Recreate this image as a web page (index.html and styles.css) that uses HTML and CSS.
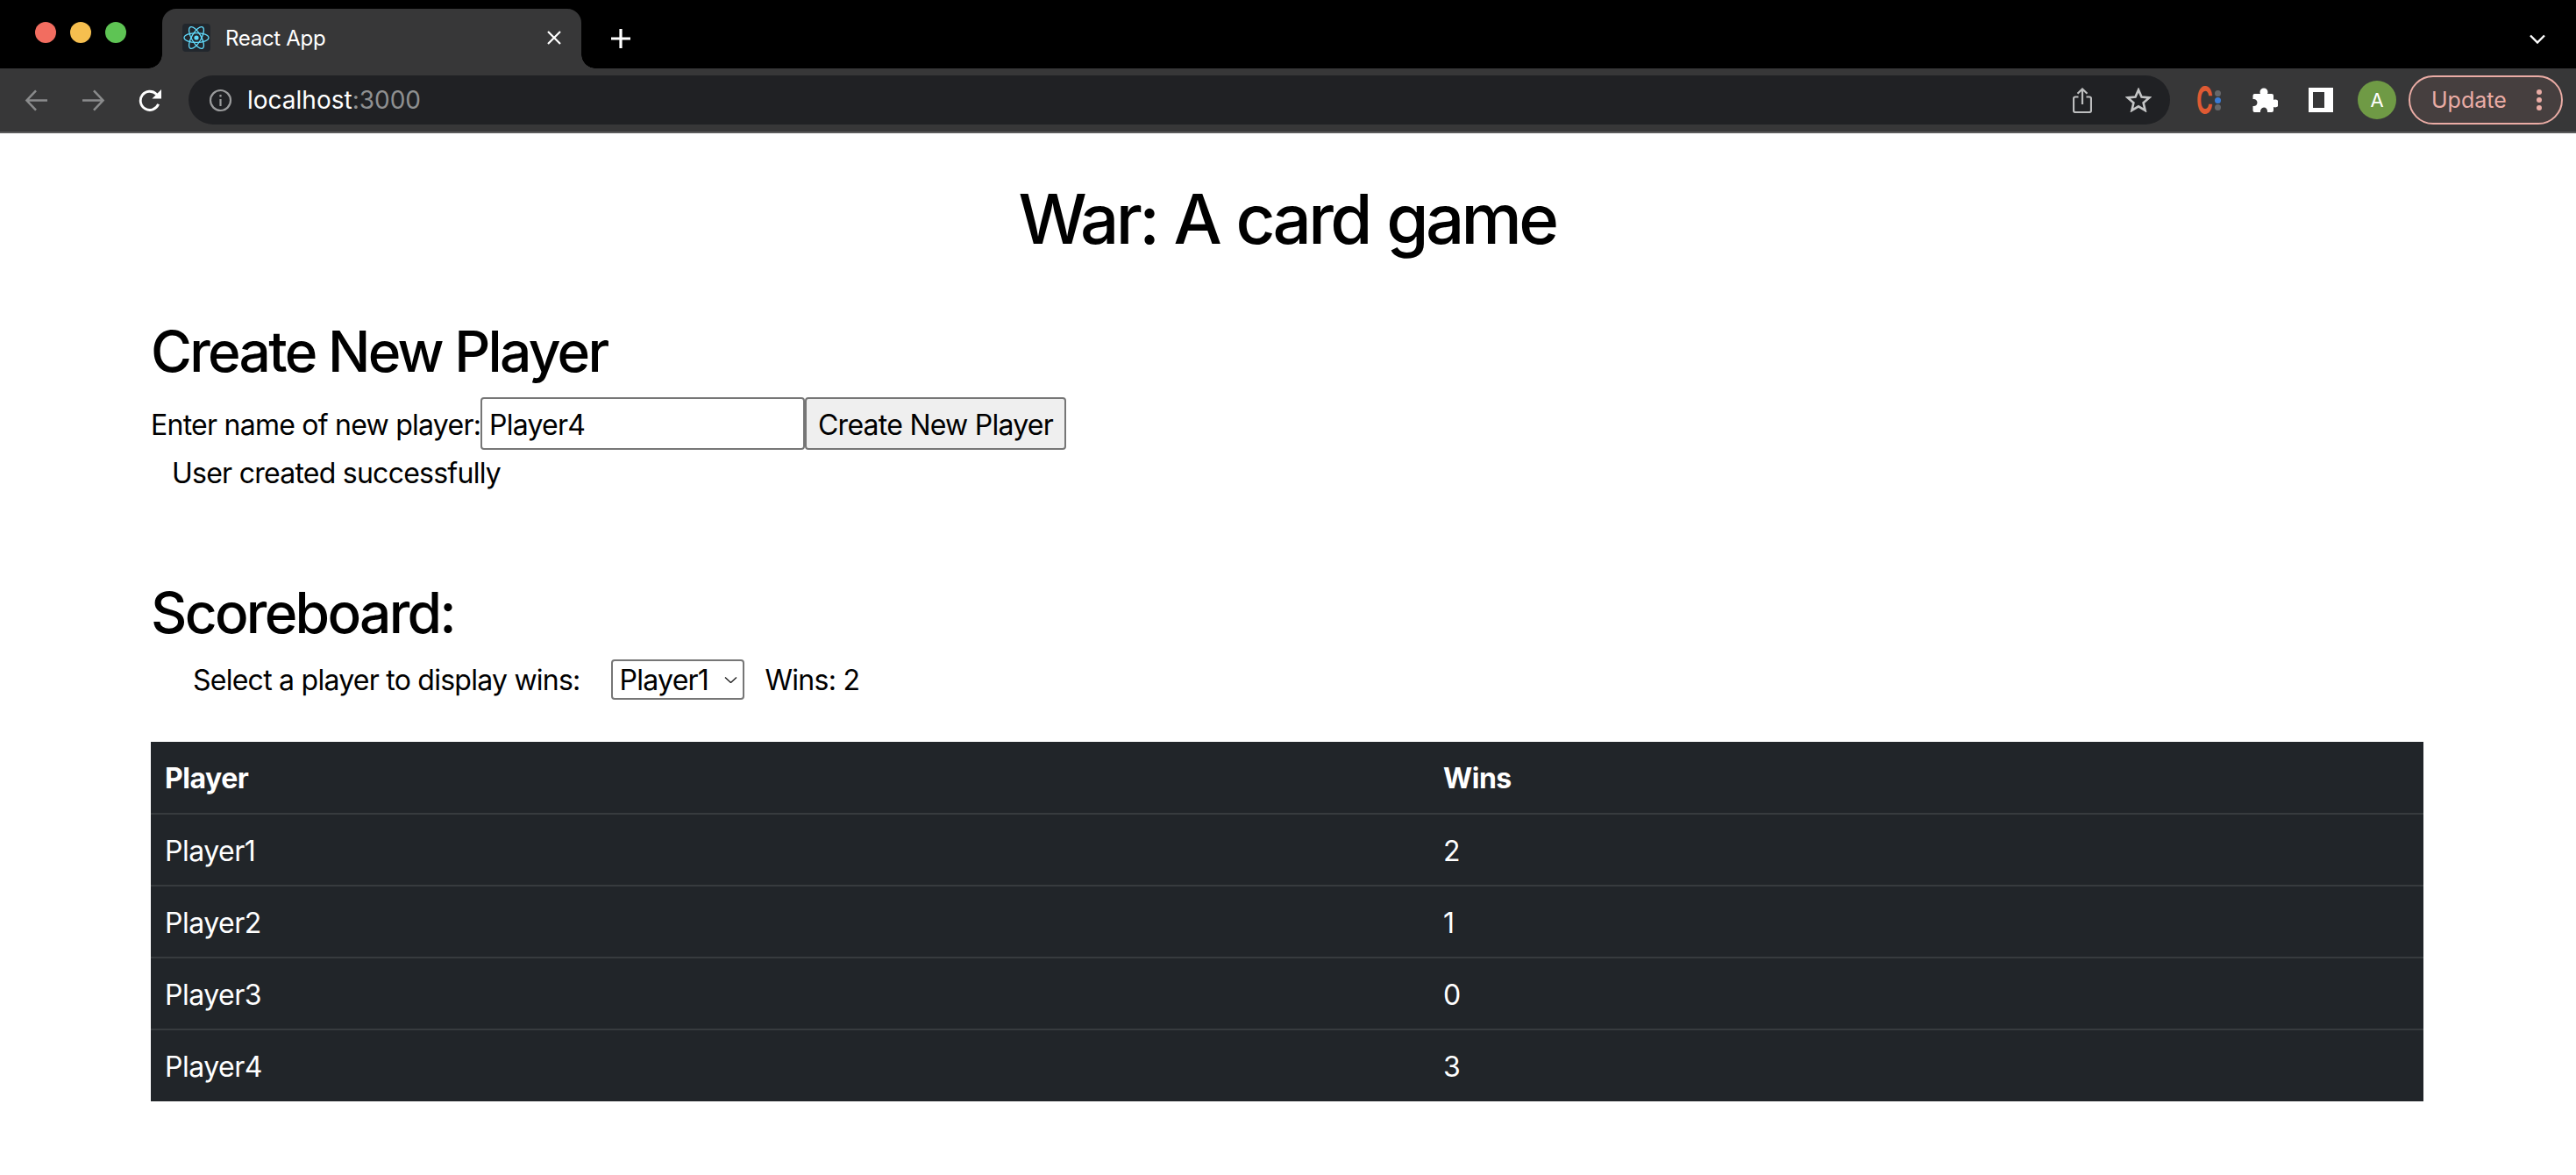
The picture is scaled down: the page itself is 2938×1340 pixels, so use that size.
FILE: index.html
```html
<!DOCTYPE html>
<html lang="en">
<head>
    <meta charset="UTF-8">
    <title>React App</title>
    <link rel="stylesheet" href="styles.css">
</head>
<body>
    <div class="browser-top">
        <div class="tabstrip">
            <div class="lights">
                <span class="light red"></span>
                <span class="light yellow"></span>
                <span class="light green"></span>
            </div>
            <div class="tab">
                <span class="favicon">
                    <svg viewBox="0 0 32 32" width="32" height="32" fill="none" stroke="#61dafb" stroke-width="1.3">
                        <circle cx="16" cy="16" r="2.6" fill="#61dafb" stroke="none"/>
                        <ellipse cx="16" cy="16" rx="14" ry="5.4"/>
                        <ellipse cx="16" cy="16" rx="14" ry="5.4" transform="rotate(60 16 16)"/>
                        <ellipse cx="16" cy="16" rx="14" ry="5.4" transform="rotate(120 16 16)"/>
                    </svg>
                </span>
                <span class="tab-title">React App</span>
                <svg class="tab-close" viewBox="0 0 16 16" width="16" height="16" stroke="#fff" stroke-width="2.2">
                    <path d="M1 1 15 15M15 1 1 15"/>
                </svg>
            </div>
            <svg class="new-tab" viewBox="0 0 24 24" width="24" height="24" stroke="#fff" stroke-width="3.2">
                <path d="M12 1V23M1 12H23"/>
            </svg>
            <svg class="tab-menu" viewBox="0 0 18 11" width="18" height="11" fill="none" stroke="#fff" stroke-width="2.4">
                <path d="M1 1.500 9 9.500 17 1.500"/>
            </svg>
        </div>
        <div class="toolbar">
            <svg class="nav-icon" viewBox="0 0 28 26" width="27" height="25" fill="none" stroke="#8a8b8c" stroke-width="2.6">
                <path d="M27 13H3M13.500 1.500 2.500 13 13.500 24.500"/>
            </svg>
            <svg class="nav-icon" viewBox="0 0 28 26" width="27" height="25" fill="none" stroke="#8a8b8c" stroke-width="2.6">
                <path d="M1 13H25M14.500 1.500 25.500 13 14.500 24.500"/>
            </svg>
            <svg class="nav-icon" viewBox="0 0 28 26" width="27" height="25" fill="none" stroke="#fff" stroke-width="3">
                <path d="M23.500 17.500A11 11 0 1 1 21 5.500L25 9"/>
                <path d="M27 0V11H16Z" fill="#fff" stroke="none"/>
            </svg>
            <div class="omnibox">
                <svg class="info-icon" viewBox="0 0 27 27" width="27" height="27" fill="none" stroke="#9a9b9c" stroke-width="2.2">
                    <circle cx="13.500" cy="13.500" r="11.500"/>
                    <path d="M13.500 12V20M13.500 7V9.500"/>
                </svg>
                <span class="url">localhost<span class="url-port">:3000</span></span>
                <svg class="share-icon" viewBox="0 0 22 29" width="22" height="29" fill="none" stroke="#bdbebf" stroke-width="2.2">
                    <path d="M6.500 10.500H3A2 2 0 0 0 1 12.500V26A2 2 0 0 0 3 28H19A2 2 0 0 0 21 26V12.500A2 2 0 0 0 19 10.500H15.500"/>
                    <path d="M11 19V2M5.500 6.800 11 1.500 16.500 6.800"/>
                </svg>
                <svg class="star-icon" viewBox="0 0 30 28" width="30" height="28" fill="none" stroke="#c4c5c6" stroke-width="2.6">
                    <path d="M15 2.500 18.500 10.600 27.300 11.400 20.600 17.300 22.600 25.900 15 21.300 7.400 25.900 9.400 17.300 2.700 11.400 11.500 10.600Z"/>
                </svg>
            </div>
            <div class="ext-c">
                <span class="ext-letter">C</span>
                <span class="ext-dots"><i></i><i class="blue"></i><i></i></span>
            </div>
            <svg class="puzzle-icon" viewBox="0 0 29 29" width="29" height="29" fill="#fff">
                <path d="M13 .500a4.500 4.500 0 0 1 4.500 4.500c0 .8-.2 1.400-.5 2h5a2 2 0 0 1 2 2v5c.7-.4 1.300-.5 2-.5a2.500 2.500 0 0 1 0 9c-.7 0-1.300-.2-2-.5V26a2 2 0 0 1-2 2h-5c.4-3-1.500-5.500-4-5.500s-4.300 2.500-4 5.500H2.500A2 2 0 0 1 .500 26v-5c3 .4 5-1.500 5-4s-2-4.500-5-4V9a2 2 0 0 1 2-2H9c-.3-.6-.5-1.200-.5-2A4.500 4.500 0 0 1 13 .500z"/>
            </svg>
            <span class="sidepanel-icon"></span>
            <span class="avatar">A</span>
            <div class="update">
                <span>Update</span>
                <span class="update-dots"><i></i><i></i><i></i></span>
            </div>
        </div>
    </div>

    <div class="app">
        <h1>War: A card game</h1>

        <h2 class="create-title">Create New Player</h2>
        <div class="create-form">
            <label for="name">Enter name of new player:</label><input id="name" type="text" value="Player4"><button>Create New Player</button>
        </div>
        <p class="status">User created successfully</p>

        <h2 class="score-title">Scoreboard:</h2>
        <div class="player-select">
            <label for="player">Select a player to display wins:</label>
            <div class="select-wrap">
                <select id="player"><option>Player1</option></select>
                <svg class="select-arrow" viewBox="0 0 15 7" width="15" height="7" fill="none" stroke="#222" stroke-width="1.4">
                    <path d="M1 .500 7.500 6.500 14 .500"/>
                </svg>
            </div>
            <span>Wins: 2</span>
        </div>

        <table class="score-table">
            <thead>
                <tr><th>Player</th><th>Wins</th></tr>
            </thead>
            <tbody>
                <tr><td>Player1</td><td>2</td></tr>
                <tr><td>Player2</td><td>1</td></tr>
                <tr><td>Player3</td><td>0</td></tr>
                <tr><td>Player4</td><td>3</td></tr>
            </tbody>
        </table>
    </div>
</body>
</html>
```

FILE: styles.css
```css
* {
    box-sizing: border-box;
}
body {
    margin: 0;
    background: #fff;
    color: #000;
    font-family: 'Inter', 'Liberation Sans', sans-serif;
    font-size: 32px;
    letter-spacing: -0.75px;
    overflow: hidden;
}

/* browser chrome */
.browser-top {
    height: 152px;
    background: #000;
    border-bottom: 2px solid #5a5a5b;
    letter-spacing: 0;
}
.tabstrip {
    height: 78px;
    display: flex;
    align-items: center;
    padding-left: 40px;
}
.lights {
    display: flex;
    gap: 16px;
    margin-top: -4px;
}
.light {
    width: 24px;
    height: 24px;
    border-radius: 50%;
}
.light.red { background: #f26d60; }
.light.yellow { background: #f6bf4f; }
.light.green { background: #5ec454; }
.tab {
    position: relative;
    width: 478px;
    height: 68px;
    margin-left: 41px;
    margin-top: 10px;
    background: #373738;
    border-radius: 16px 16px 0 0;
    display: flex;
    align-items: center;
    padding: 0 23px;
    color: #fff;
    font-size: 24px;
    letter-spacing: -0.3px;
}
.tab::before,
.tab::after {
    content: "";
    position: absolute;
    bottom: 0;
    width: 16px;
    height: 16px;
}
.tab::before {
    left: -16px;
    background: radial-gradient(circle at 0 0, #000 15.500px, #373738 16px);
}
.tab::after {
    right: -16px;
    background: radial-gradient(circle at 100% 0, #000 15.500px, #373738 16px);
}
.favicon {
    width: 32px;
    height: 32px;
    border-radius: 4px;
    background: #22272d;
    display: flex;
    margin-right: 17px;
    margin-top: -2px;
}
.tab-title {
    flex: 1;
    margin-top: -2px;
}
.tab-close {
    margin-top: -2px;
}
.new-tab {
    margin-left: 33px;
    margin-top: 10px;
}
.tab-menu {
    margin-left: auto;
    margin-right: 35px;
    margin-top: 10px;
}
.toolbar {
    height: 72px;
    background: #373738;
    display: flex;
    align-items: center;
    padding-left: 28px;
}
.nav-icon {
    flex: none;
    margin-right: 38px;
}
.nav-icon:nth-of-type(3) {
    margin-right: 30px;
}
.omnibox {
    flex: none;
    width: 2260px;
    height: 56px;
    background: #202124;
    border-radius: 28px;
    display: flex;
    align-items: center;
    padding: 0 21px 0 23px;
}
.url {
    margin-left: 17px;
    flex: 1;
    color: #fff;
    font-size: 28px;
}
.url-port {
    color: #8f9091;
}
.share-icon {
    margin-right: 38px;
}
.ext-c {
    flex: none;
    width: 28px;
    height: 32px;
    margin-left: 30px;
    display: flex;
    align-items: center;
    justify-content: space-between;
}
.ext-letter {
    width: 18px;
    color: #df5a33;
    font-size: 44px;
    font-weight: 700;
    line-height: 32px;
    transform: scaleX(0.58);
    transform-origin: left;
}
.ext-dots {
    display: flex;
    flex-direction: column;
    gap: 1px;
}
.ext-dots i {
    display: block;
    width: 7px;
    height: 7px;
    border-radius: 50%;
    background: #66676a;
}
.ext-dots i.blue {
    background: #3a7bd5;
}
.puzzle-icon {
    flex: none;
    margin-left: 36px;
}
.sidepanel-icon {
    flex: none;
    width: 28px;
    height: 28px;
    margin-left: 35px;
    background: #373738;
    border: 5px solid #fff;
    border-right-width: 10px;
}
.avatar {
    flex: none;
    width: 44px;
    height: 44px;
    margin-left: 28px;
    border-radius: 50%;
    background: #6f9a45;
    color: #fff;
    font-size: 22px;
    display: flex;
    align-items: center;
    justify-content: center;
}
.update {
    flex: none;
    width: 176px;
    height: 56px;
    margin-left: 14px;
    border: 2px solid #eaaca5;
    border-radius: 28px;
    background: #463f3f;
    color: #eaaca5;
    font-size: 25px;
    display: flex;
    align-items: center;
    justify-content: space-between;
    padding: 0 22px 0 24px;
}
.update-dots {
    display: flex;
    flex-direction: column;
    gap: 3px;
}
.update-dots i {
    display: block;
    width: 6px;
    height: 6px;
    border-radius: 50%;
    background: #eaaca5;
}

/* page */
.app {
    padding: 0 174px 0 172px;
}
h1 {
    margin: 48px 0 0;
    text-align: center;
    font-size: 78px;
    font-weight: 500;
    line-height: 100px;
    letter-spacing: -3.6px;
    word-spacing: 2px;
}
h2 {
    margin: 0;
    font-size: 64px;
    font-weight: 500;
    line-height: 78px;
    letter-spacing: -2.7px;
}
.create-title {
    margin-top: 62px;
}
.create-form {
    display: flex;
    align-items: center;
    margin-top: 13px;
}
.create-form label {
    width: 376px;
    padding-top: 2px;
    white-space: nowrap;
}
.create-form input {
    width: 370px;
    height: 60px;
    padding: 2px 8px 0;
    border: 2px solid #767676;
    border-radius: 4px;
    font: inherit;
    letter-spacing: inherit;
}
.create-form button {
    width: 298px;
    height: 60px;
    padding: 2px 0 0;
    border: 2px solid #767676;
    border-radius: 4px;
    background: #efefef;
    font: inherit;
    letter-spacing: inherit;
    color: #000;
}
.status {
    margin: 4px 0 0 24px;
    line-height: 46px;
}
.score-title {
    margin-top: 97px;
}
.player-select {
    display: flex;
    align-items: center;
    margin: 14px 0 0 48px;
    height: 46px;
}
.select-wrap {
    position: relative;
    width: 152px;
    height: 46px;
    margin: 0 24px 0 35px;
}
.player-select select {
    appearance: none;
    width: 100%;
    height: 100%;
    padding: 0 0 0 8px;
    border: 2px solid #767676;
    border-radius: 4px;
    background: #fff;
    font: inherit;
    letter-spacing: inherit;
    color: #000;
}
.select-arrow {
    position: absolute;
    right: 8px;
    top: 20px;
}
.score-table {
    width: 100%;
    margin-top: 48px;
    border-collapse: collapse;
    table-layout: fixed;
    background: #212529;
    color: #fff;
    letter-spacing: -0.5px;
}
.score-table th,
.score-table td {
    height: 82px;
    padding: 2px 16px 0;
    text-align: left;
    border-bottom: 2px solid #373b3e;
}
.score-table th:first-child {
    width: 1458px;
}
.score-table th {
    font-weight: 700;
}
.score-table tr:last-child td {
    border-bottom: 0;
}
```
